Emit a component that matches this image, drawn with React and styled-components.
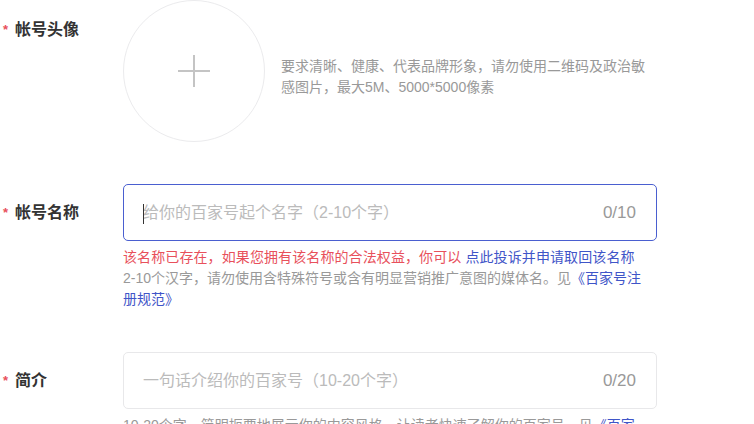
import React from 'react';
import styled, { createGlobalStyle } from 'styled-components';

const GlobalStyle = createGlobalStyle`
  html, body {
    margin: 0;
    padding: 0;
    background: #fff;
  }
  body {
    font-family: "Liberation Sans", "Noto Sans CJK SC", sans-serif;
    color: #333;
  }
`

const Form = styled.div`
  width: 754px;
  display: flex;
  flex-direction: column;
  gap: 42px;
`

const Row = styled.div`
  display: grid;
  grid-template-columns: 123px 534px;
  align-items: start;
`

const Label = styled.div`
  display: flex;
  align-items: center;
  height: ${props => props.h}px;
  font-size: 16px;
  font-weight: bold;
  color: #333;
  line-height: 22px;
  box-sizing: border-box;
`

const Star = styled.span`
  color: #e8505b;
  font-size: 13px;
  width: 15px;
  padding-left: 3px;
  box-sizing: border-box;
  line-height: 22px;
`

const AvatarRow = styled.div`
  display: flex;
  align-items: center;
  gap: 16px;
`

const Avatar = styled.div`
  width: 140px;
  height: 140px;
  border: 1px solid #ebebed;
  border-radius: 50%;
  flex-shrink: 0;
  display: flex;
  align-items: center;
  justify-content: center;
  cursor: pointer;
`

const Plus = styled.div`
  position: relative;
  width: 32px;
  height: 32px;
  &::before, &::after {
    content: '';
    position: absolute;
    background: #c4c4c4;
  }
  &::before {
    left: 0;
    right: 0;
    top: 15px;
    height: 2px;
  }
  &::after {
    top: 0;
    bottom: 0;
    left: 15px;
    width: 2px;
  }
`

const Hint = styled.div`
  font-size: 14px;
  line-height: 21px;
  color: #999;
  max-width: ${props => props.w || 525}px;
  margin-top: ${props => props.mt || 0}px;
`

const Red = styled.div`
  font-size: 14px;
  line-height: 22px;
  color: #e8505b;
  margin-top: 5px;
  letter-spacing: 0.1px;
`

const Link = styled.a`
  color: #3f55c8;
  text-decoration: none;
  cursor: pointer;
`

const Field = styled.div`
  position: relative;
  display: flex;
  align-items: center;
  height: 57px;
  box-sizing: border-box;
  border: 1px solid ${props => props.active ? '#4a5fd0' : '#e8e8ea'};
  border-radius: 5px;
  padding: 0 20px 0 19px;
`

const Input = styled.input`
  flex: 1;
  border: none;
  outline: none;
  background: transparent;
  padding: 0;
  font-family: "Liberation Sans", "Noto Sans CJK SC", sans-serif;
  font-size: 16px;
  color: #333;
  &::placeholder {
    color: #bbbbbb;
  }
`

const Caret = styled.span`
  position: absolute;
  left: 19px;
  top: 19px;
  width: 1px;
  height: 20px;
  background: #333;
`

const Count = styled.span`
  font-size: 17px;
  color: #999;
`

export default function App() {
  return (
    <>
      <GlobalStyle />
      <Form>
        <Row>
          <Label h={60}>
            <Star>*</Star>帐号头像
          </Label>
          <AvatarRow>
            <Avatar><Plus /></Avatar>
            <Hint w={370} mt={11}>
              要求清晰、健康、代表品牌形象，请勿使用二维码及政治敏感图片，最大5M、5000*5000像素
            </Hint>
          </AvatarRow>
        </Row>

        <Row>
          <Label h={57}>
            <Star>*</Star>帐号名称
          </Label>
          <div>
            <Field active>
              <Caret />
              <Input placeholder="给你的百家号起个名字（2-10个字）" />
              <Count>0/10</Count>
            </Field>
            <Red>
              该名称已存在，如果您拥有该名称的合法权益，你可以 <Link>点此投诉并申请取回该名称</Link>
            </Red>
            <Hint>
              2-10个汉字，请勿使用含特殊符号或含有明显营销推广意图的媒体名。见<Link>《百家号注册规范》</Link>
            </Hint>
          </div>
        </Row>

        <Row>
          <Label h={57}>
            <Star>*</Star>简介
          </Label>
          <div>
            <Field>
              <Input placeholder="一句话介绍你的百家号（10-20个字）" />
              <Count>0/20</Count>
            </Field>
            <Hint mt={6}>
              10-20个字，简明扼要地展示你的内容风格，让读者快速了解你的百家号。见<Link>《百家号注册规范》</Link>
            </Hint>
          </div>
        </Row>
      </Form>
    </>
  );
}
